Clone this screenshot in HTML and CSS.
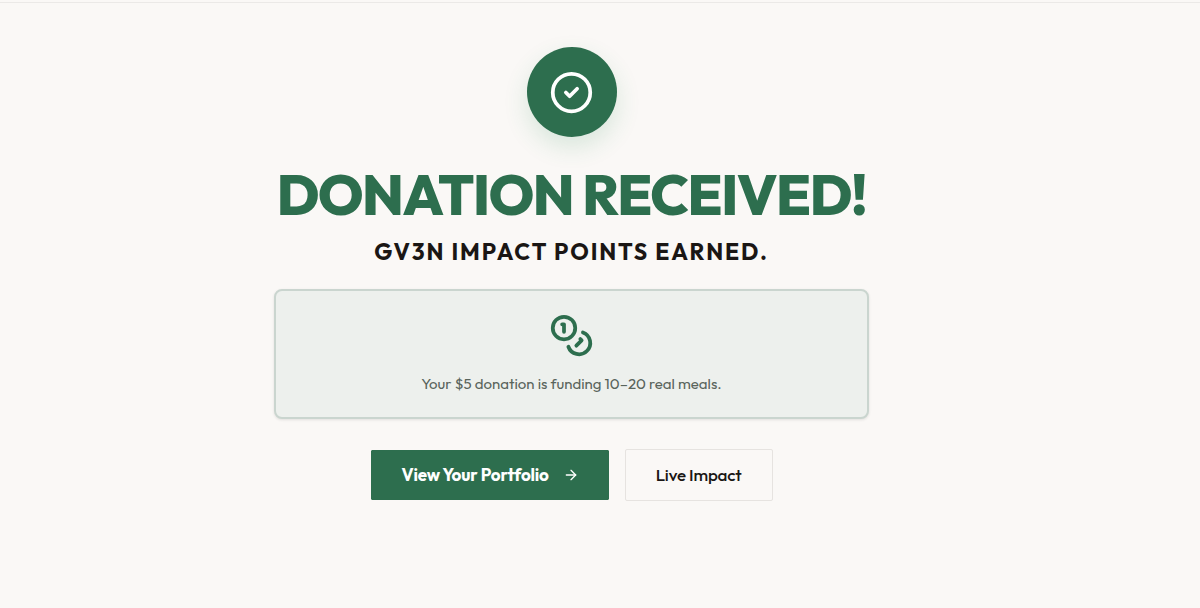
FILE: index.html
```html
<!DOCTYPE html>
<html lang="en">
<head>
<meta charset="utf-8">
<meta name="viewport" content="width=device-width, initial-scale=1">
<title>Donation received</title>
<link rel="stylesheet" href="styles.css">
</head>
<body>
<main class="page">
  <section class="confirmation">
    <div class="badge">
      <svg class="icon" viewBox="0 0 24 24" aria-hidden="true"><circle cx="12" cy="12" r="10"/><path d="m9 12 2 2 4-4"/></svg>
    </div>
    <h1 class="title">DONATION RECEIVED!</h1>
    <p class="subtitle">GV3N IMPACT POINTS EARNED.</p>
    <div class="card">
      <svg class="icon" viewBox="0 0 24 24" aria-hidden="true"><circle cx="8" cy="8" r="6"/><path d="M18.09 10.37A6 6 0 1 1 10.34 18"/><path d="M7 6h1v4"/><path d="m16.71 13.88.7.71-2.82 2.82"/></svg>
      <p class="card-text">Your $5 donation is funding 10–20 real meals.</p>
    </div>
    <div class="actions">
      <a class="button primary" href="#portfolio">View Your Portfolio
        <svg class="arrow" viewBox="0 0 24 24" aria-hidden="true"><path d="M5 12h14"/><path d="m12 5 7 7-7 7"/></svg>
      </a>
      <a class="button secondary" href="#impact">Live Impact</a>
    </div>
  </section>
</main>
</body>
</html>
```
FILE: styles.css
```css
* { box-sizing: border-box; }
body {
  margin: 0;
  background: #faf8f6;
  color: #1a1614;
  font-family: Outfit, Lato, sans-serif;
}
.page {
  margin-top: 2px;
  border-top: 1px solid #ebe9e7;
  padding: 44px 57px 48px 0;
}
.confirmation {
  display: flex;
  flex-direction: column;
  align-items: center;
  max-width: 595px;
  margin: 0 auto;
  text-align: center;
}
.icon, .arrow {
  display: block;
  fill: none;
  stroke: currentColor;
  stroke-width: 2;
  stroke-linecap: round;
  stroke-linejoin: round;
}
.icon { width: 45px; height: 45px; }
.badge {
  display: grid;
  place-items: center;
  width: 90px;
  height: 90px;
  border-radius: 50%;
  background: #2d6e4e;
  color: #fff;
  box-shadow: 0 10px 24px rgba(45, 140, 90, .16);
}
.title {
  margin: 30px 0 0;
  color: #2d6e4e;
  font-size: 56px;
  font-weight: 800;
  line-height: 56px;
  letter-spacing: -0.025em;
  white-space: nowrap;
}
.subtitle {
  margin: 14px 0 0;
  font-size: 23px;
  font-weight: 700;
  line-height: 30px;
  letter-spacing: 0.08em;
}
.card {
  display: flex;
  flex-direction: column;
  align-items: center;
  gap: 14px;
  width: 100%;
  margin-top: 22px;
  padding: 22px;
  border: 2px solid #cad5cf;
  border-radius: 8px;
  background: #edf0ed;
  color: #2d6e4e;
  box-shadow: 0 1px 3px rgba(0, 0, 0, .1);
}
.card-text {
  margin: 0;
  color: #59645c;
  font-size: 15px;
  font-weight: 400;
  line-height: 23px;
}
.actions {
  display: flex;
  gap: 15px;
  margin-top: 30px;
}
.button {
  display: flex;
  align-items: center;
  gap: 14px;
  padding: 14px 30px;
  border-radius: 2px;
  font-size: 17px;
  line-height: 22px;
  letter-spacing: -0.01em;
  text-decoration: none;
}
.primary {
  border: 1px solid #faf8f6;
  background: #2d6e4e;
  background-clip: padding-box;
  color: #fff;
  font-weight: 700;
}
.secondary {
  border: 1px solid #e6e3e0;
  background: #faf8f6;
  color: #1a1614;
  font-weight: 500;
}
.arrow { width: 16px; height: 16px; }
```
